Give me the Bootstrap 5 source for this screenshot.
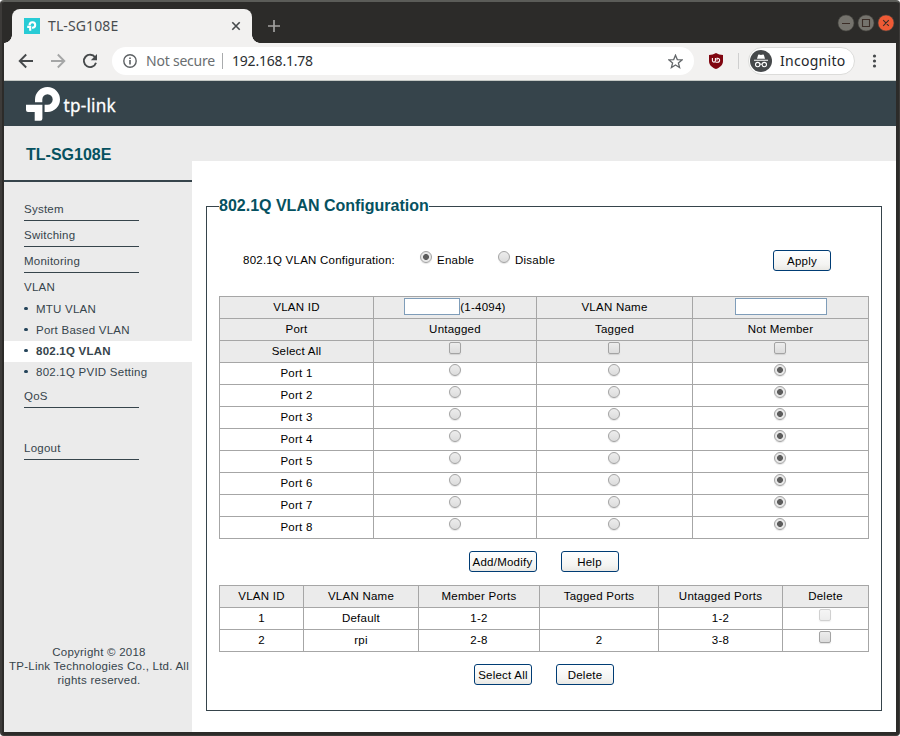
<!DOCTYPE html>
<html lang="en">
<head>
<meta charset="utf-8">
<title>TL-SG108E</title>
<link href="https://cdn.jsdelivr.net/npm/bootstrap@5.3.0/dist/css/bootstrap.min.css" rel="stylesheet">
<style>
body{margin:0;width:900px;height:736px;overflow:hidden;background:#fff;font-family:"Liberation Sans",Arial,sans-serif;font-size:11.5px;letter-spacing:.24px;line-height:14px;color:#000}
svg{display:block;flex:none}
.window{width:900px;height:736px;background:#2c2b29;border:solid #3d3b39;border-width:2px 1px 1px 2px;border-top-color:#5b5c58;border-radius:4px;padding:0 3px 3px 2px}
.chrome-ui{font-family:"Noto Sans","Open Sans",sans-serif;font-size:14px;letter-spacing:0;line-height:20px}
.titlebar{height:41px;padding:7px 0 0 8px}
.tab{position:relative;width:240px;height:34px;background:#f2f1f0;border-radius:8px 8px 0 0;padding:0 11px 0 12px;color:#484c4f}
.tab::before,.tab::after{content:"";position:absolute;bottom:0;width:8px;height:8px}
.tab::before{left:-8px;background:radial-gradient(circle at 0 0,#2c2b29 7.5px,#f2f1f0 8px)}
.tab::after{right:-8px;background:radial-gradient(circle at 100% 0,#2c2b29 7.5px,#f2f1f0 8px)}
.tab-title{margin-left:8px;letter-spacing:.12px}
.plus{margin-left:15px}
.toolbar{height:38px;background:#f2f1f0;border-bottom:1px solid #c5c9c5;padding:0 14px 1px 14px}
.gap-icon{margin-left:16px}
.omni{width:582px;height:28px;border-radius:14px;background:#fff;margin-left:14px;padding:0 11px 0 11px}
.unsafe{color:#6a6e71;margin-left:9px;width:69px;letter-spacing:-.22px}
.addr{color:#2b2e31;margin-left:9px;letter-spacing:-.2px}
.sep{width:1px;height:16px;background:#a9abad}
.omni .sep{margin-left:7px}
.sep.pale{background:#cfcfcf;margin-left:15px}
.shield{margin-left:15px}
.incog{width:107px;height:28px;border:1px solid #dcdcda;border-radius:14px;background:#fff;padding-left:1px;margin-left:9px;color:#25282b;letter-spacing:.28px}
.page{height:651px;background:#ebebeb}
.brandbar{height:45px;background:#36444b;padding:6px 0 0 22px}
.side{width:188px;color:#36444b}
.model{height:56px;border-bottom:2px solid #36444b;padding:20px 0 0 22px;font-size:16px;letter-spacing:0;line-height:18px;font-weight:700;color:#055160}
.menu{padding-top:13px}
.top-item{width:115px;height:26px;margin-left:20px;padding-top:7px;border-bottom:1px solid #36444b}
.top-item.open{border:0}
.sub-item{height:21px;padding:0 0 2px 20px}
.sub-item i{width:4px;height:3px;border-radius:1.5px;background:#24445a;margin:0 8px 1px 0}
.sub-item.current{background:#fff;font-weight:700;letter-spacing:.24px}
.top-item.after-subs{height:25px;padding-top:6px}
.logout{margin-top:26px}
.copy{margin-top:185px;padding-left:1px;margin-right:-1px}
.main-pane{width:704px;height:571px;background:#fff;margin-top:35px;padding:35px 14px 0}
.frame{border:1px solid #36444b;height:515px;padding:0 12px;min-width:0}
.frame legend{float:none;width:auto;margin:0;padding:0 0 2px;font-size:16px;letter-spacing:0;line-height:19px;font-weight:700;color:#055160}
.mode{height:21px;margin-top:33px;padding:0 38px 0 24px}
.mode-name{width:177px}
.mode-name,.mode-opt{padding-bottom:1px}
.mode-opt.first{width:78px}
.ctl{appearance:none;display:block;width:12px;height:12px;margin:0 auto;border:1px solid #a3a3a3;border-radius:2px;background:linear-gradient(#ededed,#dcdcdc);box-shadow:0 1px 1px #0000001c;position:relative;top:-3px;left:-.5px;flex:none}
.ctl[type=radio]{border-radius:50%}
.ctl[type=radio]:checked{background:radial-gradient(circle,#5c5c5c 2.6px,#e8e8e8 3.3px)}
.ctl:disabled{opacity:.5}
.mode .ctl{margin:0 5px 0 0;left:0}
.cmd{height:21px;min-width:58px;padding:1px 0 0;border:1px solid #003c74;border-radius:3px;background:linear-gradient(#fff,#f4f4f2 70%,#e9e8e4);font-size:11.5px;line-height:17px;letter-spacing:.24px;color:#000;box-shadow:none;white-space:nowrap}
.cmd.wide{width:68px}
.grid-table{width:650px;table-layout:fixed;border-collapse:collapse;margin:0}
.grid-table td,.grid-table th{height:22px;padding:0 0 2px;border:1px solid #a6a6a6;text-align:center;vertical-align:middle;font-weight:400}
.ports-table{margin-top:25px}
.shade{background:#ebebeb}
.field{height:17px;border:1px solid #7f9db9;padding:0;background:#fff;border-radius:0}
.field.vid{width:56px}.field.vname{width:92px}
.cmds-a{padding:12px 0 13px;margin-right:1px;gap:24px}
.cmds-b{padding-top:12px;gap:24px}
</style>
</head>
<body>
<div class="window">
 <header class="chrome-ui">
  <div class="titlebar d-flex">
   <div class="tab d-flex align-items-center">
    <svg width="16" height="16" viewBox="0 0 16 16"><rect width="16" height="16" fill="#28cbd5"/><path d="M5.6 7.2V6.8A2.8 2.8 0 1 1 8.4 9.8H8M3.2 8.9H6.2V12.8" fill="none" stroke="#fff" stroke-width="2.1"/></svg>
    <span class="tab-title me-auto">TL-SG108E</span>
    <svg width="10" height="10" viewBox="0 0 10 10"><path d="M1.3 1.3 8.7 8.7M8.7 1.3 1.3 8.7" stroke="#45494b" stroke-width="1.6"/></svg>
   </div>
   <svg class="plus mt-2" width="14" height="18" viewBox="0 0 14 18"><path d="M7 3V15M1 9H13" stroke="#a2a19f" stroke-width="1.7"/></svg>
   <svg class="ms-auto mt-1" width="62" height="20" viewBox="0 0 62 20"><g stroke="#454440" stroke-width=".6"><circle cx="12" cy="10" r="8" fill="#75736d"/><circle cx="32" cy="10" r="8" fill="#75736d"/><circle cx="52" cy="10" r="8" fill="#ef5a35"/></g><path d="M8 10.5H16M28.5 6.5H35.5V13.5H28.5ZM49.2 7.2 54.8 12.8M54.8 7.2 49.2 12.8" fill="none" stroke="#3b2d27" stroke-width="1.1"/></svg>
  </div>
  <div class="toolbar d-flex align-items-center">
   <svg width="16" height="16" viewBox="0 0 16 16"><path d="M15 8H2M8.2 1.5 1.7 8l6.5 6.5" fill="none" stroke="#46494b" stroke-width="1.9"/></svg>
   <svg class="gap-icon" width="16" height="16" viewBox="0 0 16 16"><path d="M1 8H14M7.8 1.5 14.3 8l-6.5 6.5" fill="none" stroke="#a5a6a6" stroke-width="1.9"/></svg>
   <svg class="gap-icon" width="16" height="16" viewBox="0 0 16 16"><path d="M13.1 4.2A6.2 6.2 0 1 0 14 9.8" fill="none" stroke="#46494b" stroke-width="1.9"/><path d="M15 1V7.2H8.8Z" fill="#46494b"/></svg>
   <div class="omni d-flex align-items-center">
    <svg width="14" height="14" viewBox="0 0 14 14"><circle cx="7" cy="7" r="6.2" fill="none" stroke="#5d6164" stroke-width="1.4"/><path d="M7 6.1V10.4M7 3.4V5" stroke="#5d6164" stroke-width="1.6"/></svg>
    <span class="unsafe text-nowrap">Not secure</span>
    <span class="sep"></span>
    <span class="addr me-auto">192.168.1.78</span>
    <svg width="15" height="15" viewBox="0 0 15 15"><path d="M7.5 1.2 9.3 5.6 14 5.9 10.4 8.9 11.6 13.5 7.5 11 3.4 13.5 4.6 8.9 1 5.9 5.7 5.6Z" fill="none" stroke="#63676a" stroke-width="1.3"/></svg>
   </div>
   <svg class="shield" width="14" height="16" viewBox="0 0 14 16"><path d="M7 0C9 1.3 11.5 1.9 14 2V8C14 12 11 14.5 7 16C3 14.5 0 12 0 8V2C2.5 1.9 5 1.3 7 0Z" fill="#800610"/><path d="M3.4 4.9V7.6A1.5 1.5 0 0 0 6.4 7.6V4.9M6.4 9.3H8.6A2 2 0 0 0 8.6 5.3H8V7.6" fill="none" stroke="#fff" stroke-width="1.1"/></svg>
   <span class="sep pale"></span>
   <div class="incog d-flex align-items-center">
    <svg width="22" height="22" viewBox="0 0 22 22"><circle cx="11" cy="11" r="11" fill="#46494b"/><path d="M7 8.8 8.2 4.7Q9 4.2 11 5 13 4.2 13.8 4.7L15 8.8ZM4 9.7H18V10.8H4Z" fill="#fff"/><g fill="none" stroke="#fff" stroke-width="1.1"><circle cx="7.7" cy="14.6" r="2.2"/><circle cx="14.3" cy="14.6" r="2.2"/><path d="M9.9 14.4Q11 13.7 12.1 14.4"/></g></svg>
    <span class="ms-2">Incognito</span>
   </div>
   <svg class="ms-auto" width="16" height="14" viewBox="0 0 16 14"><g fill="#46494b"><circle cx="8.5" cy="2" r="1.6"/><circle cx="8.5" cy="7" r="1.6"/><circle cx="8.5" cy="12" r="1.6"/></g></svg>
  </div>
 </header>
 <div class="page">
  <div class="brandbar">
   <svg width="96" height="36" viewBox="26 87 96 36"><g fill="#fff"><path d="M35 102.3V99.5A12.5 12.5 0 0 1 47.5 87A12.5 12.5 0 0 1 47.5 112H44.6V104.7H47.5A5.2 5.2 0 1 0 42.3 99.5V102.3Z"/><path d="M26 104.8H42.4V118.5A2.2 2.2 0 0 1 40.2 120.8H34.7V112H28A2 2 0 0 1 26 110Z"/><text x="63.5" y="112" font-family="'Noto Sans',sans-serif" font-size="18" stroke="#fff" stroke-width=".3" textLength="52.5" lengthAdjust="spacingAndGlyphs">tp-link</text></g></svg>
  </div>
  <div class="d-flex">
   <aside class="side">
    <div class="model">TL-SG108E</div>
    <nav class="menu">
     <div class="top-item">System</div>
     <div class="top-item">Switching</div>
     <div class="top-item">Monitoring</div>
     <div class="top-item open">VLAN</div>
     <div class="sub-item d-flex align-items-center"><i></i>MTU VLAN</div>
     <div class="sub-item d-flex align-items-center"><i></i>Port Based VLAN</div>
     <div class="sub-item d-flex align-items-center current"><i></i>802.1Q VLAN</div>
     <div class="sub-item d-flex align-items-center"><i></i>802.1Q PVID Setting</div>
     <div class="top-item after-subs">QoS</div>
     <div class="top-item logout">Logout</div>
    </nav>
    <div class="copy text-center text-nowrap">Copyright © 2018<br>TP-Link Technologies Co., Ltd. All<br>rights reserved.</div>
   </aside>
   <main class="main-pane">
    <fieldset class="frame">
     <legend>802.1Q VLAN Configuration</legend>
     <div class="mode d-flex align-items-center">
      <span class="mode-name text-nowrap">802.1Q VLAN Configuration:</span>
      <label class="mode-opt first d-flex align-items-center"><input class="ctl" type="radio" name="mode" checked>Enable</label>
      <label class="mode-opt d-flex align-items-center"><input class="ctl" type="radio" name="mode">Disable</label>
      <button class="btn cmd ms-auto">Apply</button>
     </div>
     <table class="grid-table ports-table">
      <colgroup><col style="width:154px"><col style="width:163px"><col style="width:156px"><col style="width:176px"></colgroup>
      <tbody id="ports">
       <tr class="shade"><td>VLAN ID</td><td><div class="d-flex align-items-center justify-content-center"><input class="field vid">(1-4094)</div></td><td>VLAN Name</td><td><div class="d-flex justify-content-center"><input class="field vname"></div></td></tr>
       <tr class="shade"><td>Port</td><td>Untagged</td><td>Tagged</td><td>Not Member</td></tr>
       <tr class="shade"><td>Select All</td><td><input class="ctl" type="checkbox"></td><td><input class="ctl" type="checkbox"></td><td><input class="ctl" type="checkbox"></td></tr>
      </tbody>
     </table>
     <div class="cmds-a d-flex justify-content-center"><button class="btn cmd wide">Add/Modify</button><button class="btn cmd">Help</button></div>
     <table class="grid-table">
      <colgroup><col style="width:84px"><col style="width:115px"><col style="width:121px"><col style="width:119px"><col style="width:124px"><col style="width:86px"></colgroup>
      <tbody>
       <tr class="shade"><th>VLAN ID</th><th>VLAN Name</th><th>Member Ports</th><th>Tagged Ports</th><th>Untagged Ports</th><th>Delete</th></tr>
       <tr><td>1</td><td>Default</td><td>1-2</td><td></td><td>1-2</td><td><input class="ctl" type="checkbox" disabled></td></tr>
       <tr><td>2</td><td>rpi</td><td>2-8</td><td>2</td><td>3-8</td><td><input class="ctl" type="checkbox"></td></tr>
      </tbody>
     </table>
     <div class="cmds-b d-flex justify-content-center"><button class="btn cmd">Select All</button><button class="btn cmd">Delete</button></div>
    </fieldset>
   </main>
  </div>
 </div>
</div>
<script>
for (let n = 1; n <= 8; n++) {
  const radio = on => `<td><input class="ctl" type="radio" name="port${n}"${on ? " checked" : ""}></td>`;
  document.getElementById("ports").insertAdjacentHTML("beforeend", `<tr><td>Port ${n}</td>${radio(false)}${radio(false)}${radio(true)}</tr>`);
}
</script>
<script src="https://cdn.jsdelivr.net/npm/bootstrap@5.3.0/dist/js/bootstrap.bundle.min.js"></script>
</body>
</html>
